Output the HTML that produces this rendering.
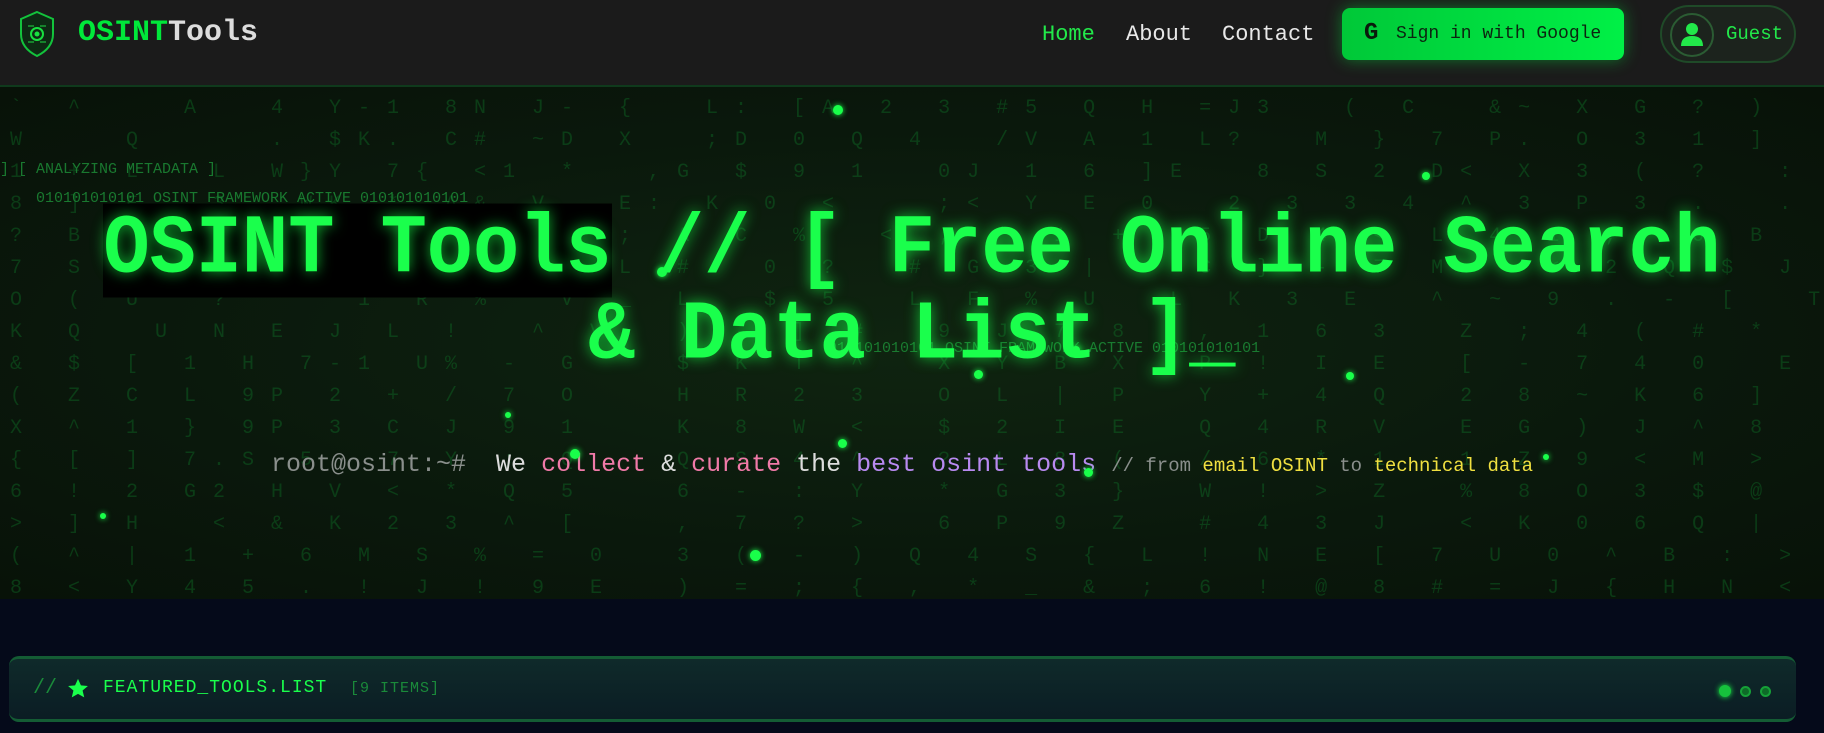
<!DOCTYPE html>
<html><head><meta charset="utf-8">
<style>
*{margin:0;padding:0;box-sizing:border-box}
body{width:1824px;height:733px;overflow:hidden;background:#050a1a;font-family:"Liberation Mono",monospace;position:relative}
nav{position:absolute;left:0;top:0;width:1824px;height:87px;background:#1b1b1b;border-bottom:2px solid #0f3a1c;z-index:5}
.logo{position:absolute;left:78px;top:16px;font-size:30px;font-weight:bold;color:#00e83a}
.logo span{color:#ddd}
.shield{position:absolute;left:18px;top:10px}
.links a{position:absolute;top:22px;font-size:22px;color:#e8e8e8;text-decoration:none}
.btn{position:absolute;left:1342px;top:8px;width:282px;height:52px;border-radius:8px;background:linear-gradient(90deg,#00c838,#00f046);box-shadow:0 0 16px rgba(0,230,60,.45);color:#0c2410;font-size:18px;line-height:52px;padding-left:54px}
.btn b{position:absolute;left:22px;top:0;font-size:24px;color:#0a1a0c}
.guest{position:absolute;left:1660px;top:5px;width:136px;height:58px;border-radius:29px;border:2px solid #1f4a28;background:#1c231d}
.guest .av{position:absolute;left:8px;top:6px;width:44px;height:44px;border-radius:50%;border:2px solid #2b5c33}
.guest .t{position:absolute;left:64px;top:16px;font-size:19px;color:#22e84a}
.hero{position:absolute;left:0;top:87px;width:1824px;height:512px;background:radial-gradient(ellipse at 50% 50%,#0f2410 0%,#0a180c 60%,#081208 100%);overflow:hidden}
.rain{position:absolute;left:10px;top:6px;font-size:20px;line-height:32px;letter-spacing:17px;color:#0f7a2a;opacity:.38;white-space:pre}
.dot{position:absolute;border-radius:50%;background:#19ff4a;box-shadow:0 0 6px #19ff4a}
.meta{position:absolute;color:#1c8a36;font-size:15px;white-space:pre;opacity:.85}
.title{position:absolute;left:0;width:1824px;text-align:center;font-size:77px;font-weight:bold;color:#1aff4c;text-shadow:0 0 14px rgba(20,255,70,.7);transform:scaleY(1.08);white-space:pre}
.hl{background:#000;color:#1aff4c}
.sub{position:absolute;left:271px;top:363px;font-size:25px;white-space:pre;color:#ddd}
.bot{position:absolute;left:9px;top:656px;width:1787px;height:66px;border-radius:10px;background:linear-gradient(180deg,#0f2a2a,#0b1d24);border-top:3px solid #145c34;border-bottom:3px solid #145c34}
</style></head><body>
<nav>
<svg class="shield" width="38" height="48" viewBox="0 0 38 48"><path d="M19 2 L35 9 L35 24 Q35 38 19 46 Q3 38 3 24 L3 9 Z" fill="#0e2a14" stroke="#13c33c" stroke-width="2"/><circle cx="19" cy="24" r="6" fill="none" stroke="#18e040" stroke-width="2"/><circle cx="19" cy="24" r="2.5" fill="#18e040"/><path d="M10 16h6M22 16h6M10 32h6M22 32h6" stroke="#18a034" stroke-width="1.5"/></svg>
<div class="logo">OSINT<span>Tools</span></div>
<div class="links"><a style="left:1042px;color:#22e84a">Home</a><a style="left:1126px">About</a><a style="left:1222px">Contact</a></div>
<div class="btn"><b>G</b>Sign in with Google</div>
<div class="guest"><div class="av"><svg width="40" height="40" viewBox="0 0 40 40"><circle cx="20" cy="14" r="6" fill="#22e84a"/><path d="M9 31 Q9 21 20 21 Q31 21 31 31 Z" fill="#22e84a"/></svg></div><div class="t">Guest</div></div>
</nav>
<div class="hero">
<div class="rain">` ^   A  4 Y-1 8N J- {  L: [A 2 3 #5 Q H =J3  ( C  &~ X G ? )  ` T
W   Q    . $K. C# ~D X  ;D 0 Q 4  /V A 1 L?  M } 7 P. O 3 1 ]  J  M  {
1 + L  L W}Y 7{ <1 *  ,G $ 9 1  0J 1 6 ]E  8 S 2 D< X 3 ( ?  :  :  V
8 ] E  3 ,WK * A& V  E: K 0 <   ;< Y E 0  2 3 3 4 ^ 3 P 3 .  .  #  W
? B *  R [A0  B# 2  9; A C %  < ; * 1 +  5 D 4 < L 4 1 ,  0 B  (  U
7 S 2  X R 5  # + J  L #  0 ?  # G 3 |   C } - 7 M   < 2 Q $ J  [  Q
O ( U  ? *  1 R %  V _ L  $ 5  L F % U  L K 3 E  ^ ~ 9 . - [  T  O
K Q  U N E J L !  ^ V  ) - ] #  9 J 7 8  , 1 6 3  Z ; 4 ( # *  6 ]
& $ [ 1 H 7-1 U% - G   $ K T ^  X Y B X  P ! I E  [ - 7 4 0  E  V
( Z C L 9P 2 + / 7 O   H R 2 3  O L | P  Y + 4 Q  2 8 ~ K 6 ]  F  V
X ^ 1 } 9P 3 C J 9 1   K 8 W <  $ 2 I E  Q 4 R V  E G ) J ^ 8  3  F
{ [ ] 7.S 5  7 Y ; Q   Q S 4 ^  ? L 8 (  / 6 * 1  1 Z 9 < M >  ,  7
6 ! 2 G2 H V < * Q 5   6 - : Y  * G 3 }  W ! > Z  % 8 O 3 $ @  G  ~
> ] H  < & K 2 3 ^ [   , 7 ? >  6 P 9 Z  # 4 3 J  < K 0 6 Q |  .  7
( ^ | 1 + 6 M S % = 0  3 ( - ) Q 4 S { L ! N E [ 7 U 0 ^ B : >  (  ^
8 < Y 4 5 . ! J ! 9 E  ) = ; { , * _ & ; 6 ! @ 8 # = J { H N <  [  K</div>
<div class="meta" style="left:0;top:74px">] [ ANALYZING METADATA ]</div>
<div class="meta" style="left:36px;top:103px">010101010101 OSINT FRAMEWORK ACTIVE 010101010101</div>
<div class="meta" style="left:828px;top:253px">010101010101 OSINT FRAMEWORK ACTIVE 010101010101</div>
<div class="title" style="top:120px"><span class="hl">OSINT Tools</span> // [ Free Online Search</div>
<div class="title" style="top:206px">& Data List ]_</div>
<div class="sub"><span style="color:#8a8f8c">root@osint:~#</span>  We <span style="color:#f07aa8">collect</span> &amp; <span style="color:#f07aa8">curate</span> the <span style="color:#b88af0">best osint tools</span> <span style="font-size:19px;color:#8a8f8c">// from <span style="color:#f0e040">email OSINT</span> to <span style="color:#f0e040">technical data</span></span></div>
<div class="dot" style="left:833px;top:18px;width:10px;height:10px"></div>
<div class="dot" style="left:1422px;top:85px;width:8px;height:8px"></div>
<div class="dot" style="left:657px;top:180px;width:10px;height:10px"></div>
<div class="dot" style="left:1072px;top:259px;width:8px;height:8px"></div>
<div class="dot" style="left:974px;top:283px;width:9px;height:9px"></div>
<div class="dot" style="left:1346px;top:285px;width:8px;height:8px"></div>
<div class="dot" style="left:505px;top:325px;width:6px;height:6px"></div>
<div class="dot" style="left:570px;top:362px;width:10px;height:10px"></div>
<div class="dot" style="left:838px;top:352px;width:9px;height:9px"></div>
<div class="dot" style="left:1084px;top:381px;width:9px;height:9px"></div>
<div class="dot" style="left:100px;top:426px;width:6px;height:6px"></div>
<div class="dot" style="left:750px;top:463px;width:11px;height:11px"></div>
<div class="dot" style="left:1543px;top:367px;width:6px;height:6px"></div>
</div>
<div class="bot">
<div style="position:absolute;left:24px;top:18px;font-size:20px;color:#1a8a3a">//</div>
<svg style="position:absolute;left:58px;top:19px" width="22" height="22" viewBox="0 0 24 24"><path d="M12 1l3.2 7 7.6.7-5.8 5 1.8 7.5L12 17.3 5.2 21.2 7 13.7 1.2 8.7 8.8 8z" fill="#1aff4c"/></svg>
<div style="position:absolute;left:94px;top:19px;font-size:18px;color:#1aff4c;letter-spacing:1px">FEATURED_TOOLS.LIST</div>
<div style="position:absolute;left:341px;top:21px;font-size:15px;color:#1a8a3a;letter-spacing:1px">[9 ITEMS]</div>
<div class="dot" style="left:1710px;top:26px;width:12px;height:12px;background:#16c23c"></div>
<div style="position:absolute;left:1731px;top:27px;width:11px;height:11px;border-radius:50%;background:#0e6a28;border:2px solid #16a038"></div>
<div style="position:absolute;left:1751px;top:27px;width:11px;height:11px;border-radius:50%;background:#0e6a28;border:2px solid #16a038"></div>
</div>
</body></html>
